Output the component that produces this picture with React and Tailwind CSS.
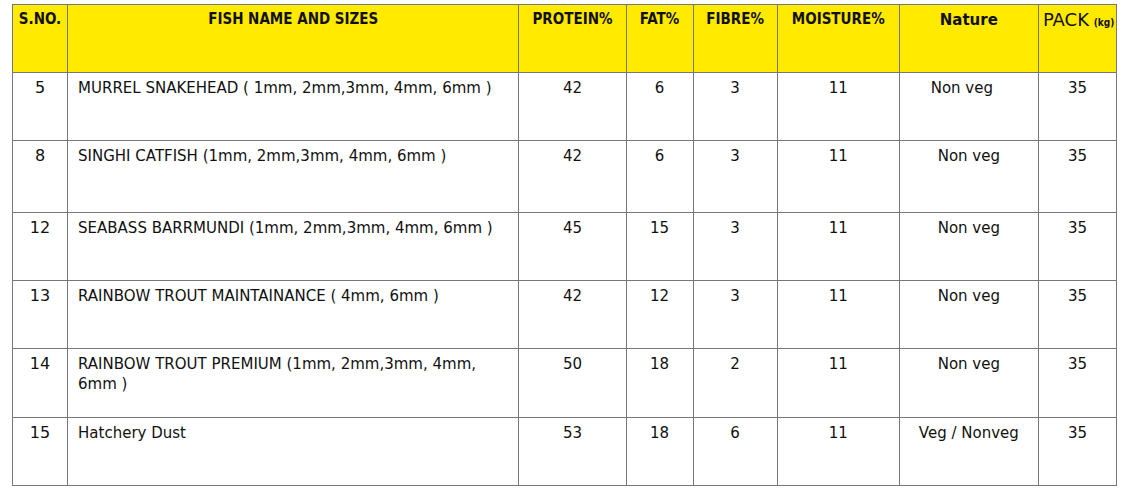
const rows = [
  { sno: "5", name: "MURREL SNAKEHEAD ( 1mm, 2mm,3mm, 4mm, 6mm )", protein: "42", fat: "6", fibre: "3", moisture: "11", nature: "Non veg", pack: "35", h: "h-[68px]", shift: true },
  { sno: "8", name: "SINGHI CATFISH (1mm, 2mm,3mm, 4mm, 6mm )", protein: "42", fat: "6", fibre: "3", moisture: "11", nature: "Non veg", pack: "35", h: "h-[72px]" },
  { sno: "12", name: "SEABASS BARRMUNDI (1mm, 2mm,3mm, 4mm, 6mm )", protein: "45", fat: "15", fibre: "3", moisture: "11", nature: "Non veg", pack: "35", h: "h-[68px]" },
  { sno: "13", name: "RAINBOW TROUT MAINTAINANCE ( 4mm, 6mm )", protein: "42", fat: "12", fibre: "3", moisture: "11", nature: "Non veg", pack: "35", h: "h-[68px]" },
  { sno: "14", name: ["RAINBOW TROUT PREMIUM (1mm, 2mm,3mm, 4mm,", "6mm )"], protein: "50", fat: "18", fibre: "2", moisture: "11", nature: "Non veg", pack: "35", h: "h-[69px]" },
  { sno: "15", name: "Hatchery Dust", protein: "53", fat: "18", fibre: "6", moisture: "11", nature: "Veg / Nonveg", pack: "35", h: "h-[68px]" },
];

const cell = "border border-[#777777] align-top text-center px-1 pt-[5px]";
const head =
  "border border-[#777777] align-top text-center px-1 pt-[4px] text-[15px] font-['DejaVu_Sans_Condensed','DejaVu_Sans',sans-serif]";

export default function App() {
  return (
    <div className="bg-white w-[1130px] h-[495px] pt-[4px] pl-[12px] font-['DejaVu_Sans',sans-serif] text-[15px] leading-[20px] text-[#111]">
      <table className="border-collapse table-fixed w-[1105px]">
        <colgroup>
          <col className="w-[55px]" />
          <col className="w-[451px]" />
          <col className="w-[107px]" />
          <col className="w-[67px]" />
          <col className="w-[84px]" />
          <col className="w-[122px]" />
          <col className="w-[139px]" />
          <col className="w-[78px]" />
        </colgroup>
        <thead>
          <tr className="h-[68px] bg-[#ffea00] font-bold">
            <th className={head}>S.NO.</th>
            <th className={head}>FISH NAME AND SIZES</th>
            <th className={head}>PROTEIN%</th>
            <th className={head}>FAT%</th>
            <th className={head}>FIBRE%</th>
            <th className={head}>MOISTURE%</th>
            <th className={cell + " pt-[4px] text-[15px]"}>Nature</th>
            <th className={cell + " pt-[2px] font-normal whitespace-nowrap"}>
              <span className="text-[18px]">PACK</span>{" "}
              <span className="text-[10px] font-bold font-['DejaVu_Sans_Condensed','DejaVu_Sans',sans-serif]">(kg)</span>
            </th>
          </tr>
        </thead>
        <tbody>
          {rows.map((r) => (
            <tr key={r.sno} className={r.h}>
              <td className={cell + " text-[16px]"}>{r.sno}</td>
              <td className={cell + " text-left pl-[10px]"}>
                {Array.isArray(r.name) ? (
                  <>
                    {r.name[0]}
                    <br />
                    {r.name[1]}
                  </>
                ) : (
                  r.name
                )}
              </td>
              <td className={cell}>{r.protein}</td>
              <td className={cell}>{r.fat}</td>
              <td className={cell}>{r.fibre}</td>
              <td className={cell}>{r.moisture}</td>
              <td className={cell + (r.shift ? " pr-[18px]" : "")}>{r.nature}</td>
              <td className={cell}>{r.pack}</td>
            </tr>
          ))}
        </tbody>
      </table>
    </div>
  );
}
